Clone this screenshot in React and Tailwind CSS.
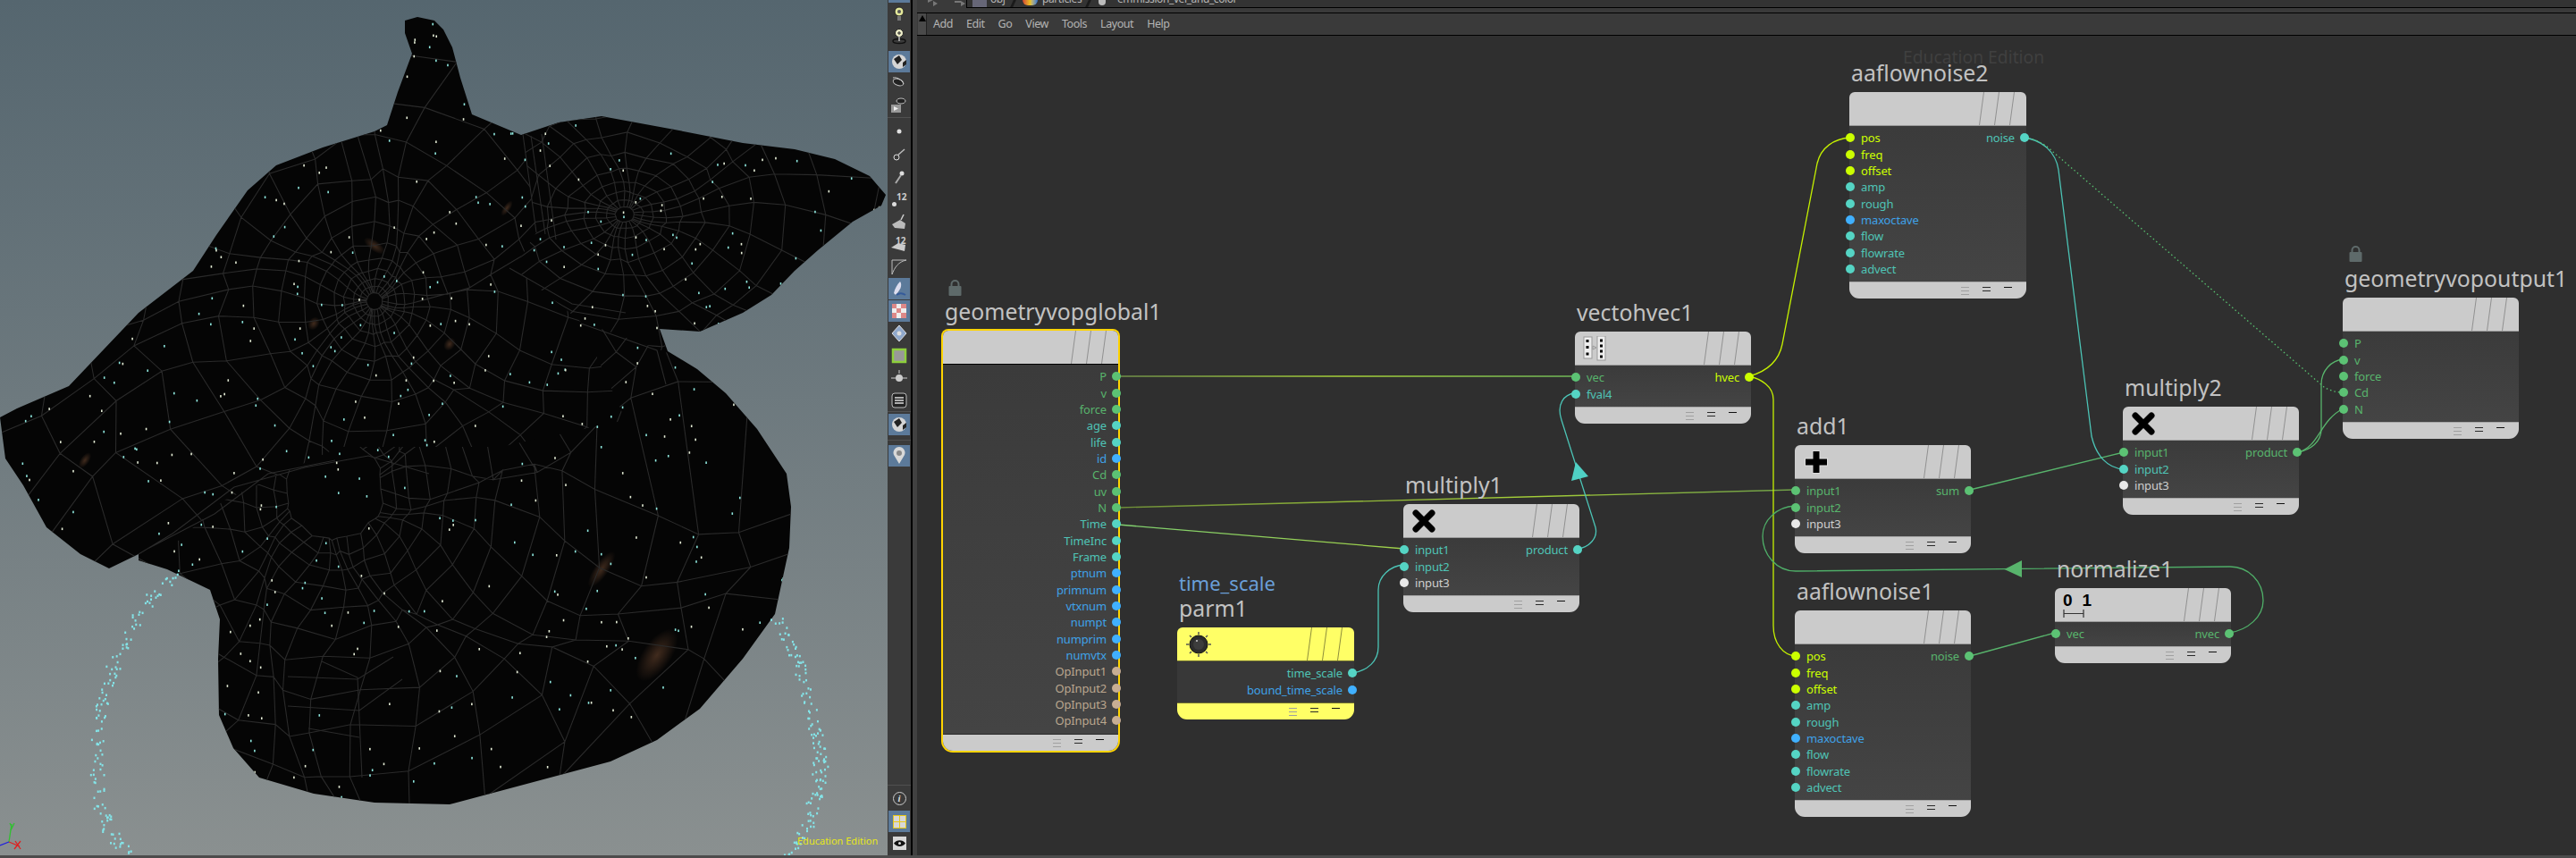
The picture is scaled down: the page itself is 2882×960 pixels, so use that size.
import React from "react";

const OX = 1026;
const OY = 40;

const C = {
  g: "#5cc274",
  t: "#55d4c4",
  b: "#40b0ff",
  y: "#ccff00",
  o: "#c8ae94",
  w: "#e8e8e8",
};

const TEXT = { ...C, w: "#d0d0d0", g: "#58b46c", t: "#4fc4b6", b: "#3fa2e8", o: "#bca78f" };

const rowsOf = (s) =>
  s.split(" ").map((p) => {
    const [name, type] = p.split(":");
    return { name, type };
  });

const NODES = [
  {
    label: "geometryvopglobal1", x: 1055, y: 370, w: 196, selected: true,
    outputs: rowsOf("P:g v:g force:g age:t life:t id:b Cd:g uv:g N:g Time:t TimeInc:t Frame:t ptnum:b primnum:b vtxnum:b numpt:b numprim:b numvtx:b OpInput1:o OpInput2:o OpInput3:o OpInput4:o"),
    inputs: [],
  },
  { label: "parm1", caption: "time_scale", x: 1317, y: 702, w: 198, parm: true, icon: "knob", inputs: [], outputs: rowsOf("time_scale:t bound_time_scale:b") },
  { label: "multiply1", x: 1570, y: 564, w: 197, icon: "times", inputs: rowsOf("input1:t input2:t input3:w"), outputs: rowsOf("product:t") },
  { label: "vectohvec1", x: 1762, y: 371, w: 197, icon: "vec", inputs: rowsOf("vec:g fval4:t"), outputs: rowsOf("hvec:y") },
  { label: "add1", x: 2008, y: 498, w: 197, icon: "plus", inputs: rowsOf("input1:g input2:g input3:w"), outputs: rowsOf("sum:g") },
  { label: "aaflownoise2", x: 2069, y: 103, w: 198, inputs: rowsOf("pos:y freq:y offset:y amp:t rough:t maxoctave:b flow:t flowrate:t advect:t"), outputs: rowsOf("noise:t") },
  { label: "multiply2", x: 2375, y: 455, w: 197, icon: "times", inputs: rowsOf("input1:g input2:t input3:w"), outputs: rowsOf("product:g") },
  { label: "geometryvopoutput1", x: 2621, y: 333, w: 197, inputs: rowsOf("P:g v:g force:g Cd:g N:g"), outputs: [] },
  { label: "aaflownoise1", x: 2008, y: 683, w: 197, inputs: rowsOf("pos:y freq:y offset:y amp:t rough:t maxoctave:b flow:t flowrate:t advect:t"), outputs: rowsOf("noise:g") },
  { label: "normalize1", x: 2299, y: 658, w: 197, icon: "range", inputs: rowsOf("vec:g"), outputs: rowsOf("nvec:g") },
];

const WIRES = [
  { d: "M1251 421 L1762 421", stroke: "url(#wireP)" },
  { d: "M1251 568 L2008 548", stroke: "url(#wireN)" },
  { d: "M1251 587 L1571 614", stroke: "url(#wireT)" },
  { d: "M1766 614 C1778 612 1788 602 1785 590 L1747 470 C1741 452 1750 441 1762 440", stroke: "#4cc4b6" },
  { d: "M1514 753 C1530 750 1542 740 1542 724 L1542 660 C1542 645 1555 633 1571 632", stroke: "#4cc4b6" },
  { d: "M1957 421 C1975 416 1990 405 1994 385 L2033 183 C2037 165 2052 155 2070 154", stroke: "#c4f000" },
  { d: "M1957 421 C1970 424 1984 432 1984 447 L1984 700 C1984 720 1995 733 2009 734", stroke: "#c4f000" },
  { d: "M2204 548 L2376 506", stroke: "#58b46c" },
  { d: "M2265 154 C2285 157 2300 170 2303 190 L2340 488 C2345 510 2358 524 2376 525", stroke: "#4cc4b6" },
  { d: "M2265 154 C2280 156 2290 163 2297 170 L2600 433 C2606 437 2614 439 2622 439", stroke: "#58c070", dash: "1.5 3" },
  { d: "M2571 506 C2585 503 2597 495 2597 480 L2597 430 C2597 415 2608 403 2622 402", stroke: "#58b46c" },
  { d: "M2571 506 C2595 500 2595 470 2622 457", stroke: "#58b46c" },
  { d: "M2204 734 L2299 708", stroke: "#58b46c" },
  { d: "M2494 708 C2515 705 2532 690 2532 672 C2532 650 2515 634 2495 634 L2009 639 C1987 639 1972 620 1972 600 C1972 582 1988 567 2008 566", stroke: "#4fae68" },
];

const SILHOUETTE = [
  [453,23],[467,19],[486,23],[496,33],[506,53],[515,87],[528,128],[583,151],[625,137],[673,130],[760,146],[831,160],[889,167],[934,178],[973,197],[991,218],[986,230],[954,248],[915,280],[889,303],[863,330],[831,350],[783,371],[738,368],[747,393],[780,413],[812,440],[847,480],[880,530],[885,567],[883,613],[867,687],[831,737],[783,793],[735,828],[683,852],[503,900],[419,898],[351,888],[290,870],[261,837],[245,800],[244,737],[246,693],[235,660],[187,637],[155,627],[155,620],[122,636],[90,620],[52,590],[26,543],[6,513],[0,467],[19,457],[77,432],[155,350],[216,303],[242,263],[277,213],[309,185],[361,165],[419,147],[433,140],[445,103],[461,60],[453,37],
];

const REGION_A = "0,0 600,0 585,150 600,260 575,300 650,360 700,470 560,500 380,500 250,560 160,640 0,640";
const REGION_B = "600,0 1000,0 1000,500 735,390 650,360 575,300 600,260 585,150";
const REGION_C = "0,960 0,640 160,640 250,560 380,500 560,500 700,470 650,360 735,390 1000,500 1000,960";

const rng = (seed) => {
  let s = seed;
  return () => {
    s = (s * 16807) % 2147483647;
    return s / 2147483647;
  };
};

const web = (cx, cy, radii, n, sx, sy, seed) => {
  const r = rng(seed);
  const wobble = radii.map(() => Array.from({ length: n }, () => 0.95 + r() * 0.1));
  const pt = (i, j) => {
    const a = (j / n) * Math.PI * 2 + 0.12 * Math.sin(i * 0.7 + j);
    const k = radii[i] * wobble[i][j];
    return `${(cx + Math.cos(a) * k * sx).toFixed(1)} ${(cy + Math.sin(a) * k * sy).toFixed(1)}`;
  };
  let d = "";
  radii.forEach((_, i) => {
    d += "M" + Array.from({ length: n }, (_, j) => pt(i, j)).join("L") + "Z";
  });
  for (let j = 0; j < n; j++) {
    d += "M" + radii.map((_, i) => pt(i, j)).join("L");
  }
  return d;
};

const inside = (x, y) => {
  let c = false;
  for (let i = 0, j = SILHOUETTE.length - 1; i < SILHOUETTE.length; j = i++) {
    const [xi, yi] = SILHOUETTE[i];
    const [xj, yj] = SILHOUETTE[j];
    if (yi > y !== yj > y && x < ((xj - xi) * (y - yi)) / (yj - yi) + xi) c = !c;
  }
  return c;
};

const meshDots = () => {
  const r = rng(77);
  const out = [];
  while (out.length < 430) {
    const x = r() * 990;
    const y = r() * 900;
    if (inside(x, y)) out.push({ x, y, c: r() > 0.5 ? "#8fe8df" : "#e4ecd6" });
  }
  return out;
};

const ARC_L = [[193,643],[155,687],[129,740],[110,797],[106,847],[110,897],[122,930],[142,955]];
const ARC_R = [[867,690],[892,740],[908,797],[918,847],[915,880],[905,915],[883,955]];

const arcDots = (arc, seed) => {
  const r = rng(seed);
  const out = [];
  for (let i = 0; i < 140; i++) {
    const t = r() * (arc.length - 1);
    const k = Math.floor(t);
    const f = t - k;
    const a = arc[k];
    const b = arc[k + 1];
    out.push({ x: a[0] + (b[0] - a[0]) * f + (r() - 0.5) * 16, y: a[1] + (b[1] - a[1]) * f + (r() - 0.5) * 8 });
  }
  return out;
};

const GLOWS = [[735,733,16,34],[673,637,8,24],[419,275,14,6],[351,362,6,8],[503,385,6,8],[567,233,4,10],[95,515,5,10]];

const Viewport = () => {
  const sil = SILHOUETTE.map((p) => p.join(",")).join(" ");
  const webA = web(419, 337, [9, 16, 24, 34, 46, 62, 82, 106, 136, 172, 214, 262, 316, 376, 440], 30, 1, 1.05, 11);
  const webB = web(699, 240, [9, 17, 27, 39, 54, 72, 94, 120, 152, 190, 234, 284, 340], 26, 1.2, 0.95, 23);
  const webC = web(374, 547, [52, 66, 82, 100, 122, 148, 178, 212, 250, 292, 340, 392, 450, 515, 590], 36, 1.05, 1.1, 37);
  const dots = meshDots();
  return (
    <div className="relative w-[993px] h-full bg-gradient-to-b from-[#55666f] to-[#8a9090] overflow-hidden">
      <svg className="absolute inset-0" width="993" height="957" viewBox="0 0 993 957">
        <defs>
          <clipPath id="sil"><polygon points={sil} /></clipPath>
          <clipPath id="ra"><polygon points={REGION_A} /></clipPath>
          <clipPath id="rb"><polygon points={REGION_B} /></clipPath>
          <clipPath id="rc"><polygon points={REGION_C} /></clipPath>
          <radialGradient id="glow">
            <stop offset="0%" stopColor="#8a5a3c" stopOpacity="0.45" />
            <stop offset="100%" stopColor="#8a5a3c" stopOpacity="0" />
          </radialGradient>
        </defs>
        <polygon points={sil} fill="#050505" />
        <g clipPath="url(#sil)">
          {GLOWS.map(([x, y, rx, ry]) => (
            <ellipse key={x} cx={x} cy={y} rx={rx} ry={ry} fill="url(#glow)" transform={`rotate(35 ${x} ${y})`} />
          ))}
          <g fill="none" stroke="#2a2a2a" strokeWidth="1.1">
            <path d={webA} clipPath="url(#ra)" />
            <path d={webB} clipPath="url(#rb)" />
            <path d={webC} clipPath="url(#rc)" />
            <path d="M155 620 L193 597 L262 545 L341 523 L412 510 L480 530 M167 613 L240 575 L300 530 L375 515 M322 757 L400 760 L440 735 M322 790 L402 795 L450 760 M345 815 L402 825 M360 740 L400 758 L405 870 M600 260 L585 150 M610 262 L594 152 M622 268 L606 150 M650 362 L735 392 L745 430 M570 300 L640 340 L700 350" />
          </g>
          {dots.map((p, i) => (
            <rect key={i} x={p.x} y={p.y} width="1.6" height="2.6" fill={p.c} />
          ))}
        </g>
        {arcDots(ARC_L, 5).concat(arcDots(ARC_R, 9)).map((p, i) => (
          <rect key={i} x={p.x} y={p.y} width="2" height="2.5" fill="#84e4e8" />
        ))}
        <g fill="none" strokeWidth="1.3">
          <path d="M10 942 L13 922" stroke="#30c030" />
          <path d="M10 942 L22 947" stroke="#e02020" />
          <path d="M10 942 L0 946" stroke="#2020e0" />
          <path d="M17 941 L23 950 M23 941 L16 950" stroke="#e02020" />
          <path d="M11 921 L13 925 M16 921 L12 929" stroke="#30c030" />
        </g>
      </svg>
      <div className="absolute left-[892px] top-[933px] text-[11px] leading-[16px] text-[#e7e71a] whitespace-nowrap">Education Edition</div>
    </div>
  );
};

const TOOLS = [
  { h: 3, sel: true },
  { h: 25, icon: "bulb" },
  { h: 25, icon: "bulbRing" },
  { h: 4 },
  { h: 24, icon: "ball", sel: true },
  { h: 22, icon: "ghost" },
  { h: 28, icon: "ghostCam" },
  { h: 1, sep: true },
  { h: 2 },
  { h: 26, icon: "dot" },
  { h: 26, icon: "edge" },
  { h: 25, icon: "pin" },
  { h: 25, icon: "num" },
  { h: 24, icon: "face" },
  { h: 25, icon: "faceNum" },
  { h: 25, icon: "curve" },
  { h: 1 },
  { h: 24, icon: "faceBlue", sel: true },
  { h: 1 },
  { h: 24, icon: "check", sel: true },
  { h: 25, icon: "diamond" },
  { h: 25, icon: "greenBox" },
  { h: 25, icon: "handle" },
  { h: 25, icon: "stack" },
  { h: 1, sep: true },
  { h: 2 },
  { h: 24, icon: "ball", sel: true },
  { h: 5 },
  { h: 1, sep: true },
  { h: 5 },
  { h: 24, icon: "mapPin", sel: true },
];

const ToolIcon = ({ name }) => {
  const s = { width: 22, height: 22, viewBox: "0 0 22 22" };
  switch (name) {
    case "bulb":
      return <svg {...s}><circle cx="11" cy="8" r="5" fill="#e4e89a" stroke="#222" /><circle cx="11" cy="8" r="2" fill="#555" /><rect x="9" y="13" width="4" height="5" fill="#777" /></svg>;
    case "bulbRing":
      return <svg {...s}><circle cx="11" cy="7" r="4.5" fill="#ececc8" stroke="#222" /><path d="M11 5 V9 M9 7 H13" stroke="#222" /><ellipse cx="11" cy="16" rx="7" ry="2.5" fill="none" stroke="#111" strokeWidth="1.5" /><rect x="10" y="11" width="2" height="5" fill="#999" /></svg>;
    case "ball":
      return <svg {...s}><circle cx="11" cy="11" r="8" fill="#d5d5d5" /><path d="M5 8 L11 4 L14 9 L9 14 Z M15 12 L19 9 L19 14 L15 17 Z" fill="#222" /></svg>;
    case "ghost":
      return <svg {...s}><ellipse cx="10" cy="11" rx="6" ry="3.5" fill="#222" stroke="#bbb" transform="rotate(20 10 11)" /><path d="M4 6 C8 5 14 8 16 13" stroke="#ccc" fill="none" /></svg>;
    case "ghostCam":
      return <svg {...s}><rect x="2" y="11" width="11" height="9" fill="#999" /><path d="M5 13 L10 15.5 L5 18 Z" fill="#eee" /><ellipse cx="13" cy="7" rx="5" ry="3" fill="#222" stroke="#bbb" /></svg>;
    case "dot":
      return <svg {...s}><circle cx="11" cy="11" r="2.5" fill="#e0e0e0" /></svg>;
    case "edge":
      return <svg {...s}><circle cx="8" cy="14" r="3" fill="none" stroke="#ddd" /><path d="M9 12 L17 5" stroke="#bbb" strokeWidth="1.5" /></svg>;
    case "pin":
      return <svg {...s}><circle cx="14" cy="6" r="2.5" fill="#ddd" /><path d="M13 8 L7 17" stroke="#aaa" strokeWidth="2" /></svg>;
    case "num":
      return <div className="relative w-[22px] h-[22px]"><div className="absolute left-[3px] top-[13px] w-[5px] h-[5px] rounded-full bg-[#ddd]" /><div className="absolute left-[8px] top-0 text-[10px] leading-[14px] font-bold text-[#ccc]">12</div></div>;
    case "face":
      return <svg {...s}><path d="M3 14 L12 9 L18 13 L17 19 L6 18 Z" fill="#bbb" /><path d="M13 9 L16 3" stroke="#ccc" strokeWidth="1.5" /></svg>;
    case "faceNum":
      return <div className="relative w-[22px] h-[22px]"><svg {...s} className="absolute inset-0"><path d="M2 15 L10 10 L18 12 L17 19 Z" fill="#ccc" /></svg><div className="absolute left-[7px] top-0 text-[10px] leading-[14px] font-bold text-[#ccc]">12</div></div>;
    case "curve":
      return <svg {...s}><path d="M3 20 V4 H19 M3 20 C6 12 10 6 19 4" fill="none" stroke="#bbb" /></svg>;
    case "faceBlue":
      return <svg {...s}><path d="M12 3 C15 7 12 13 7 18 L5 16 C6 11 9 6 12 3 Z" fill="#dde" /><path d="M8 18 C12 15 15 16 18 18" stroke="#345a9a" strokeWidth="2" fill="none" /></svg>;
    case "check":
      return <svg {...s}><rect x="3" y="3" width="16" height="16" fill="#eee" /><path d="M3 3 H8 V8 H3 Z M13 3 H19 V8 H13 Z M8 8 H13 V13 H8 Z M3 13 H8 V19 H3 Z M13 13 H19 V19 H13 Z" fill="#d88" /></svg>;
    case "diamond":
      return <svg {...s}><path d="M11 2 L19 11 L11 20 L3 11 Z" fill="#8fa8cc" stroke="#ddd" /><circle cx="11" cy="11" r="2.5" fill="#ddd" /></svg>;
    case "greenBox":
      return <svg {...s}><rect x="4" y="4" width="14" height="14" fill="#999" stroke="#8ecf3c" strokeWidth="2.5" /></svg>;
    case "handle":
      return <svg {...s}><circle cx="11" cy="11" r="4" fill="#ccc" /><path d="M2 11 H20 M11 2 V6" stroke="#ccc" /></svg>;
    case "stack":
      return <svg {...s}><rect x="3" y="3" width="16" height="16" rx="3" fill="#222" stroke="#bbb" /><path d="M6 8 H16 M6 11 H16 M6 14 H16" stroke="#ddd" strokeWidth="1.5" /></svg>;
    case "mapPin":
      return <svg {...s}><path d="M11 20 L5 10 A6.5 6.5 0 1 1 17 10 Z" fill="#d8d8d8" /><circle cx="11" cy="8" r="3" fill="#888" /></svg>;
    default:
      return null;
  }
};

const Toolbar = () => (
  <div className="flex flex-col w-[26px] h-full bg-[#3a3a3a]">
    {TOOLS.map((t, i) => (
      <div
        key={i}
        style={{ height: t.h }}
        className={`flex items-center justify-center shrink-0 overflow-hidden ${t.sel ? "bg-[#5c7a9a] mx-[1px]" : ""} ${t.sep ? "bg-[#505050]" : ""}`}
      >
        {t.icon && <ToolIcon name={t.icon} />}
      </div>
    ))}
    <div className="flex-1" />
    <div className="h-[1px] bg-[#505050]" />
    <div className="h-[28px] flex items-center justify-center">
      <div className="w-[15px] h-[15px] rounded-full border border-[#ccc] flex items-center justify-center text-[11px] italic font-bold text-[#ddd] font-['Liberation_Serif',serif]">i</div>
    </div>
    <div className="h-[24px] mx-[1px] bg-[#5c7a9a] flex items-center justify-center">
      <div className="grid grid-cols-2 gap-[1px] w-[15px] h-[15px] bg-[#e8c818] p-[1px]">
        <div className="bg-[#d8d8d8]" />
        <div className="bg-[#d8d8d8]" />
        <div className="bg-[#d8d8d8]" />
        <div className="bg-[#d8d8d8]" />
      </div>
    </div>
    <div className="h-[24px] flex items-center justify-center">
      <div className="w-[15px] h-[15px] bg-[#d8d8d8] flex items-center justify-center">
        <svg width="13" height="9" viewBox="0 0 13 9"><path d="M0 4.5 C3 0 10 0 13 4.5 C10 9 3 9 0 4.5 Z" fill="#111" /><circle cx="6.5" cy="4.5" r="1.5" fill="#ddd" /></svg>
      </div>
    </div>
    <div className="h-[2px]" />
  </div>
);

const TabBar = () => (
  <div className="h-[14px] bg-[#3a3a3a] overflow-hidden relative">
    <div className="absolute left-[10px] top-0 flex gap-[17px]">
      <svg width="14" height="8" viewBox="0 0 14 8"><path d="M2 -3 L8 0 L2 3 Z M8 1 L13 4 L8 7 Z" fill="#777" /></svg>
      <svg width="14" height="8" viewBox="0 0 14 8"><path d="M1 1 H8 V3 H1 Z M8 1 L13 4 L8 7 Z" fill="#777" /></svg>
    </div>
    <div className="absolute left-[55px] right-0 top-0 h-[9px] border-b border-l border-black bg-[#333] flex text-[12px] leading-[16px] tracking-[-0.4px] text-[#b8b8b8] overflow-hidden">
      <div className="w-[16px] h-[8px] ml-[6px] bg-[#667] shrink-0" />
      <div className="ml-[4px] mt-[-9px] w-[24px]">obj</div>
      <div className="w-[3px] h-[8px] bg-[#1a1a1a] skew-x-[-25deg] shrink-0" />
      <div className="ml-[9px] w-[17px] h-[6px] rounded-b-full bg-gradient-to-r from-[#d04030] via-[#e8c020] to-[#3070d0] shrink-0" />
      <div className="ml-[5px] mt-[-9px] w-[42px] whitespace-nowrap">particles</div>
      <div className="ml-[8px] w-[3px] h-[8px] bg-[#1a1a1a] skew-x-[-25deg] shrink-0" />
      <div className="ml-[10px] w-[8px] h-[6px] rounded-b-full bg-[#bbb] shrink-0" />
      <div className="ml-[13px] mt-[-9px] whitespace-nowrap">emmission_vel_and_color</div>
    </div>
  </div>
);

const MENU = ["Add", "Edit", "Go", "View", "Tools", "Layout", "Help"];

const MenuBar = () => (
  <div className="h-[26px] bg-[#3a3a3a] border-y border-black flex items-center">
    <div className="w-[10px] h-full bg-[#4a4a4a] border-r border-[#222] flex justify-center pt-[2px] ml-[1px]">
      <div className="w-0 h-0 border-x-[4px] border-x-transparent border-b-[7px] border-b-black" />
    </div>
    <div className="flex gap-[15px] ml-[7px] text-[12.5px] leading-[20px] tracking-[-0.45px] text-[#b4b4b4]">
      {MENU.map((m) => (
        <span key={m}>{m}</span>
      ))}
    </div>
  </div>
);

const Slashes = ({ color }) => (
  <svg className="absolute right-[13px] top-0" width="40" height="38" viewBox="0 0 40 38">
    <path d="M39 0 L34 37 M22 0 L17 37 M5 0 L0 37" fill="none" stroke={color} strokeWidth="1" transform="translate(0.5 0)" />
  </svg>
);

const FooterMarks = () => (
  <svg className="absolute right-[13px] top-[4px]" width="60" height="13" viewBox="0 0 60 13">
    <path d="M0 1.5 H9 M0 5.5 H9 M0 9.5 H9" stroke="#a0a0a0" />
    <path d="M24 1.5 H33 M24 5.5 H33" stroke="#2a2a2a" />
    <path d="M48 1.5 H57" stroke="#111" />
  </svg>
);

const NodeIcon = ({ name }) => {
  if (name === "plus")
    return <svg width="30" height="30" viewBox="0 0 30 30"><path d="M15 2 V28 M2 15 H28" stroke="#fff" strokeOpacity="0.35" strokeWidth="9" /><path d="M15 3 V27 M3 15 H27" stroke="#000" strokeWidth="7" /></svg>;
  if (name === "times")
    return <svg width="28" height="28" viewBox="0 0 28 28"><path d="M5 5 L23 23 M23 5 L5 23" stroke="#000" strokeWidth="7" strokeLinecap="round" /></svg>;
  if (name === "knob")
    return (
      <svg width="30" height="30" viewBox="0 0 30 30">
        <path d="M15 1 V4 M15 26 V29 M1 15 H4 M26 15 H29 M5 5 L7 7 M23 7 L25 5 M5 25 L7 23 M23 23 L25 25" stroke="#555" strokeWidth="1.5" />
        <circle cx="15" cy="15" r="10" fill="#2c2c2c" stroke="#111" />
        <circle cx="15" cy="15" r="6" fill="#3c3c3c" />
        <circle cx="13" cy="11" r="1" fill="#ccc" />
      </svg>
    );
  if (name === "vec")
    return (
      <svg width="27" height="28" viewBox="0 0 27 28">
        <rect x="1" y="1" width="9" height="24" fill="#eee" stroke="#999" />
        <rect x="16" y="0" width="9" height="27" fill="#eee" stroke="#999" />
        <path d="M3.5 4 h3 v3 h-3 Z M3.5 11 h3 v3 h-3 Z M3.5 18.5 h3 v3 h-3 Z M19 3.5 h3 v3 h-3 Z M19 9.5 h3 v3 h-3 Z M19 15.5 h3 v3 h-3 Z M19 21.5 h3 v3 h-3 Z" fill="#000" />
        <path d="M11 11 L15 13 L11 15 Z" fill="none" stroke="#999" />
      </svg>
    );
  if (name === "range")
    return (
      <div className="flex flex-col items-start">
        <div className="flex gap-[11px] text-[19px] leading-[20px] font-bold text-black font-['Liberation_Sans',sans-serif]">
          <span>0</span>
          <span>1</span>
        </div>
        <svg width="24" height="9" viewBox="0 0 24 9"><path d="M1 0 V9 M23 0 V9 M1 4.5 H23" stroke="#333" strokeWidth="1.2" /></svg>
      </div>
    );
  return null;
};

const Lock = ({ x, y }) => (
  <svg className="absolute" style={{ left: x - OX, top: y - OY }} width="15" height="18" viewBox="0 0 15 18">
    <path d="M3.5 8 V5 A4 4 0 0 1 11.5 5 V8" fill="none" stroke="#5e6a6a" strokeWidth="2" />
    <rect x="0.5" y="7" width="14" height="11" rx="1" fill="#5e6a6a" />
  </svg>
);

const Dot = ({ type, side }) => (
  <div
    style={{ backgroundColor: C[type] }}
    className={`absolute top-1/2 -translate-y-1/2 w-[10px] h-[10px] rounded-full ${side === "l" ? "left-[-4px]" : "right-[-3px]"}`}
  />
);

const Node = ({ n }) => {
  const rows = Array.from({ length: Math.max(n.inputs.length, n.outputs.length) }, (_, i) => ({
    input: n.inputs[i],
    output: n.outputs[i],
  }));
  const shell = n.parm ? "bg-[#ffff66]" : "bg-[#cbcbcb]";
  return (
    <div className="absolute" style={{ left: n.x - OX, top: n.y - OY, width: n.w }}>
      <div className="absolute bottom-full left-0 mb-[7px] pl-[2px] whitespace-nowrap">
        {n.caption && <div className="text-[22px] leading-[26px] text-[#6a9fd8]">{n.caption}</div>}
        <div className="text-[24.8px] leading-[30px] text-[#c2c2c2]">{n.label}</div>
      </div>
      <div className={`rounded-t-[6px] rounded-b-[11px] ${n.selected ? "ring-2 ring-[#ffd400]" : ""}`}>
        <div className={`relative h-[38px] rounded-t-[6px] pl-[9px] flex items-center border-b ${shell} ${n.selected ? "border-black" : n.parm ? "border-[#6e6e30]" : "border-[#9a9a9a]"}`}>
          {n.icon && <NodeIcon name={n.icon} />}
          <Slashes color={n.parm ? "#8d8d3c" : "#909090"} />
        </div>
        <div className={`pt-[4px] pb-[5px] bg-gradient-to-b ${n.parm ? "from-[#383838] to-[#383838]" : "from-[#3b3b3b] to-[#444444]"}`}>
          {rows.map((r, i) => (
            <div key={i} className="relative h-[18.35px] px-[13px] flex items-center justify-between text-[13px] leading-[18px] tracking-[-0.15px] whitespace-nowrap">
              {r.input ? (
                <>
                  <Dot type={r.input.type} side="l" />
                  <span style={{ color: TEXT[r.input.type] }}>{r.input.name}</span>
                </>
              ) : (
                <span />
              )}
              {r.output && (
                <>
                  <span style={{ color: TEXT[r.output.type] }}>{r.output.name}</span>
                  <Dot type={r.output.type} side="r" />
                </>
              )}
            </div>
          ))}
        </div>
        <div className={`relative h-[19px] rounded-b-[11px] border-t ${shell} ${n.selected ? "border-[#2a2a2a]" : n.parm ? "border-[#6e6e30]" : "border-[#a8a8a8]"}`}>
          <FooterMarks />
        </div>
      </div>
    </div>
  );
};

const Canvas = () => (
  <div className="relative flex-1 bg-[#2f2f2f] overflow-hidden">
    <svg className="absolute inset-0" width="1856" height="917" viewBox={`${OX} ${OY} 1856 917`}>
      <defs>
        <linearGradient id="wireP" gradientUnits="userSpaceOnUse" x1="1251" y1="0" x2="1762" y2="0">
          <stop offset="0" stopColor="#6f8f48" />
          <stop offset="0.5" stopColor="#a6d038" />
          <stop offset="1" stopColor="#70b858" />
        </linearGradient>
        <linearGradient id="wireN" gradientUnits="userSpaceOnUse" x1="1251" y1="0" x2="2008" y2="0">
          <stop offset="0" stopColor="#6f8f38" />
          <stop offset="0.6" stopColor="#a6d038" />
          <stop offset="1" stopColor="#6f9f48" />
        </linearGradient>
        <linearGradient id="wireT" gradientUnits="userSpaceOnUse" x1="1251" y1="0" x2="1571" y2="0">
          <stop offset="0" stopColor="#7fd070" />
          <stop offset="1" stopColor="#a0d048" />
        </linearGradient>
      </defs>
      {WIRES.map((w) => (
        <path key={w.d} d={w.d} fill="none" stroke={w.stroke} strokeWidth="1.3" strokeDasharray={w.dash} />
      ))}
      <path d="M1763 517 L1758 538 L1777 533 Z" fill="#4fd0c4" />
      <path d="M2242.5 637 L2262 627 L2262 646 Z" fill="#58b46c" />
    </svg>
    <div className="absolute left-[1103px] top-[12px] text-[19.3px] leading-[24px] text-[#404040] whitespace-nowrap">Education Edition</div>
    <Lock x={1061} y={313} />
    <Lock x={2628} y={275} />
    {NODES.map((n) => (
      <Node key={n.label} n={n} />
    ))}
  </div>
);

export default function App() {
  return (
    <div className="w-[2882px] h-[960px] flex flex-col bg-[#2f2f2f] overflow-hidden font-['Noto_Sans',sans-serif]">
      <div className="flex h-[957px]">
        <Viewport />
        <Toolbar />
        <div className="w-[2px] bg-black" />
        <div className="w-[5px] bg-[#414141]" />
        <div className="flex-1 flex flex-col min-w-0">
          <TabBar />
          <MenuBar />
          <Canvas />
        </div>
      </div>
      <div className="h-[3px] bg-[#4c4c4c]" />
    </div>
  );
}
